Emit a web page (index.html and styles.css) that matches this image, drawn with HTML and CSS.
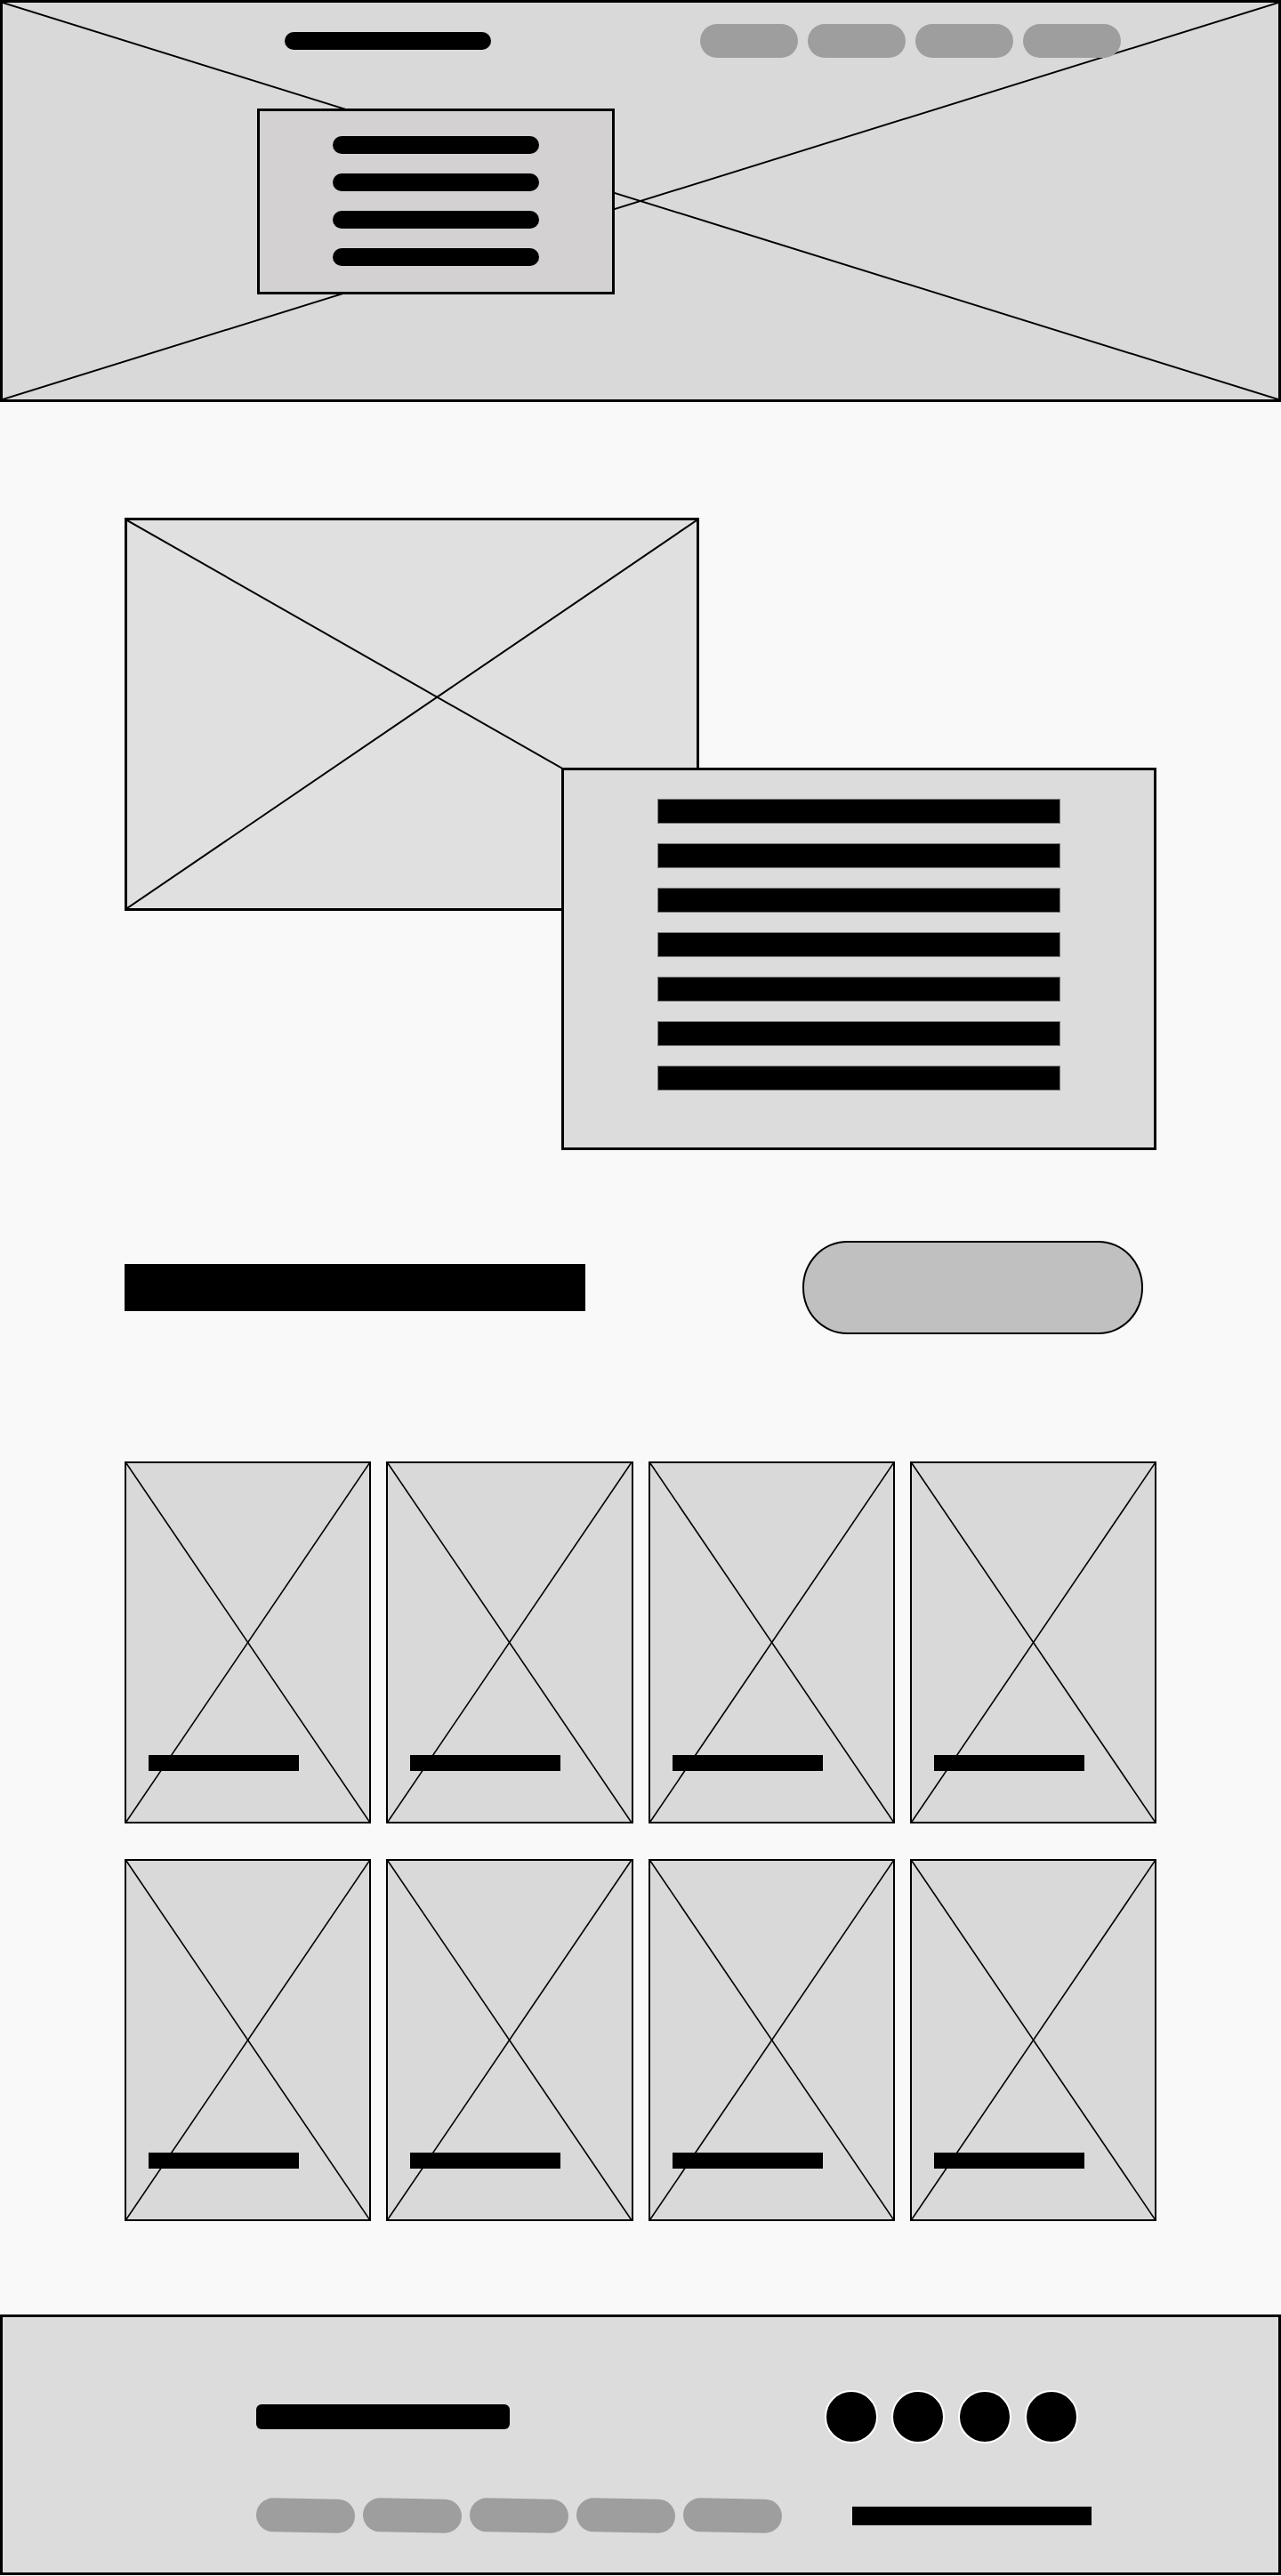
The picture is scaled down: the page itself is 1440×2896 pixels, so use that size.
FILE: index.html
```html
<!DOCTYPE html>
<html lang="en">
<head>
    <meta charset="UTF-8">
    <meta name="viewport" content="width=device-width, initial-scale=1.0">
    <title>Wireframe</title>
    <link rel="stylesheet" href="styles.css">
</head>
<body>
    <header class="top">
        <svg class="cross" viewBox="0 0 100 100" preserveAspectRatio="none"><line x1="0" y1="0" x2="100" y2="100"/><line x1="0" y1="100" x2="100" y2="0"/></svg>
        <div class="top-row">
            <div class="logo"></div>
            <nav class="nav">
                <span></span><span></span><span></span><span></span>
            </nav>
        </div>
        <div class="menu">
            <span></span><span></span><span></span><span></span>
        </div>
    </header>

    <main class="page">
        <section class="hero">
            <div class="hero-img">
                <svg class="cross" viewBox="0 0 640 436" preserveAspectRatio="none"><line x1="0" y1="0" x2="640" y2="365"/><line x1="0" y1="436" x2="640" y2="0"/></svg>
            </div>
            <div class="hero-card">
                <span></span><span></span><span></span><span></span><span></span><span></span><span></span>
            </div>
        </section>

        <div class="head-row">
            <div class="heading"></div>
            <div class="btn"></div>
        </div>

        <section class="cards">
            <div class="card"><svg class="cross thin" viewBox="0 0 100 100" preserveAspectRatio="none"><line x1="0" y1="0" x2="100" y2="100"/><line x1="0" y1="100" x2="100" y2="0"/></svg><span class="caption"></span></div>
            <div class="card"><svg class="cross thin" viewBox="0 0 100 100" preserveAspectRatio="none"><line x1="0" y1="0" x2="100" y2="100"/><line x1="0" y1="100" x2="100" y2="0"/></svg><span class="caption"></span></div>
            <div class="card"><svg class="cross thin" viewBox="0 0 100 100" preserveAspectRatio="none"><line x1="0" y1="0" x2="100" y2="100"/><line x1="0" y1="100" x2="100" y2="0"/></svg><span class="caption"></span></div>
            <div class="card"><svg class="cross thin" viewBox="0 0 100 100" preserveAspectRatio="none"><line x1="0" y1="0" x2="100" y2="100"/><line x1="0" y1="100" x2="100" y2="0"/></svg><span class="caption"></span></div>
            <div class="card"><svg class="cross thin" viewBox="0 0 100 100" preserveAspectRatio="none"><line x1="0" y1="0" x2="100" y2="100"/><line x1="0" y1="100" x2="100" y2="0"/></svg><span class="caption"></span></div>
            <div class="card"><svg class="cross thin" viewBox="0 0 100 100" preserveAspectRatio="none"><line x1="0" y1="0" x2="100" y2="100"/><line x1="0" y1="100" x2="100" y2="0"/></svg><span class="caption"></span></div>
            <div class="card"><svg class="cross thin" viewBox="0 0 100 100" preserveAspectRatio="none"><line x1="0" y1="0" x2="100" y2="100"/><line x1="0" y1="100" x2="100" y2="0"/></svg><span class="caption"></span></div>
            <div class="card"><svg class="cross thin" viewBox="0 0 100 100" preserveAspectRatio="none"><line x1="0" y1="0" x2="100" y2="100"/><line x1="0" y1="100" x2="100" y2="0"/></svg><span class="caption"></span></div>
        </section>
    </main>

    <footer class="foot">
        <div class="foot-logo"></div>
        <div class="socials">
            <span></span><span></span><span></span><span></span>
        </div>
        <div class="foot-links">
            <span></span><span></span><span></span><span></span><span></span>
        </div>
        <div class="foot-line"></div>
    </footer>
</body>
</html>
```

FILE: styles.css
```css
body
{
    margin: 0;
    padding: 0;
    background-color: #f9f9f9;
    font-family: "Liberation Sans", Arial, sans-serif;
}

/* shared X placeholder */
.cross
{
    position: absolute;
    left: 0;
    top: 0;
    width: 100%;
    height: 100%;
}
.cross line
{
    stroke: #000;
    stroke-width: 2px;
    vector-effect: non-scaling-stroke;
}
.cross.thin line
{
    stroke-width: 1.6px;
}

/* header */
.top
{
    position: relative;
    box-sizing: border-box;
    height: 452px;
    border: 3px solid #000;
    background-color: #d9d9d9;
    padding-left: 286px;
}
.top-row
{
    position: relative;
    display: flex;
    align-items: center;
    height: 38px;
    padding-top: 24px;
}
.logo
{
    margin-left: 31px;
    width: 232px;
    height: 20px;
    border-radius: 10px;
    background-color: #000;
}
.nav
{
    display: flex;
    gap: 11px;
    margin-left: 235px;
}
.nav span
{
    width: 110px;
    height: 38px;
    border-radius: 19px;
    background-color: #9e9e9e;
}
.menu
{
    position: relative;
    box-sizing: border-box;
    display: flex;
    flex-direction: column;
    align-items: center;
    gap: 22px;
    width: 402px;
    height: 209px;
    margin-top: 57px;
    padding-top: 28px;
    border: 3px solid #000;
    background-color: #d3d1d2;
}
.menu span
{
    width: 232px;
    height: 20px;
    border-radius: 10px;
    background-color: #000;
}

/* main content */
.page
{
    padding: 130px 140px 105px;
}
.hero
{
    display: grid;
    grid-template-columns: 491px 155px 514px;
    grid-template-rows: 281px 161px 269px;
}
.hero-img
{
    position: relative;
    grid-column: 1 / 3;
    grid-row: 1 / 3;
    border: 3px solid #000;
    background-color: #e0e0e0;
}
.hero-card
{
    position: relative;
    grid-column: 2 / 4;
    grid-row: 2 / 4;
    display: flex;
    flex-direction: column;
    align-items: center;
    gap: 22px;
    padding-top: 32px;
    border: 3px solid #000;
    background-color: #dcdcdc;
}
.hero-card span
{
    box-sizing: border-box;
    width: 453px;
    height: 28px;
    border: 1px solid #777;
    background-color: #000;
}
.head-row
{
    display: flex;
    align-items: center;
    justify-content: space-between;
    margin-top: 102px;
    padding-right: 15px;
}
.heading
{
    width: 518px;
    height: 53px;
    background-color: #000;
}
.btn
{
    box-sizing: border-box;
    width: 383px;
    height: 105px;
    border: 2px solid #000;
    border-radius: 50px / 52px;
    background-color: #c0c0c0;
}
.cards
{
    display: grid;
    grid-template-columns: repeat(4, 1fr);
    column-gap: 17px;
    row-gap: 40px;
    margin-top: 143px;
}
.card
{
    position: relative;
    box-sizing: border-box;
    height: 407px;
    display: flex;
    align-items: flex-end;
    padding: 0 0 57px 25px;
    border: 2px solid #000;
    background-color: #d9d9d9;
}
.caption
{
    position: relative;
    width: 169px;
    height: 18px;
    background-color: #000;
}

/* footer */
.foot
{
    box-sizing: border-box;
    height: 293px;
    display: grid;
    grid-template-columns: 639px auto;
    grid-template-rows: 64px 40px;
    row-gap: 59px;
    align-items: center;
    padding: 80px 0 0 285px;
    border: 3px solid #000;
    background-color: #dcdcdc;
}
.foot-logo
{
    width: 285px;
    height: 28px;
    border-radius: 6px;
    background-color: #000;
}
.socials
{
    display: flex;
    gap: 15px;
}
.socials span
{
    box-sizing: border-box;
    width: 60px;
    height: 60px;
    border: 2px solid #fff;
    border-radius: 50%;
    background-color: #000;
}
.foot-links
{
    display: flex;
    gap: 9px;
}
.foot-links span
{
    width: 111px;
    height: 38px;
    border-radius: 19px;
    background-color: #9e9e9e;
    transform: rotate(1deg);
}
.foot-line
{
    width: 269px;
    height: 21px;
    margin-left: 31px;
    background-color: #000;
}
```
